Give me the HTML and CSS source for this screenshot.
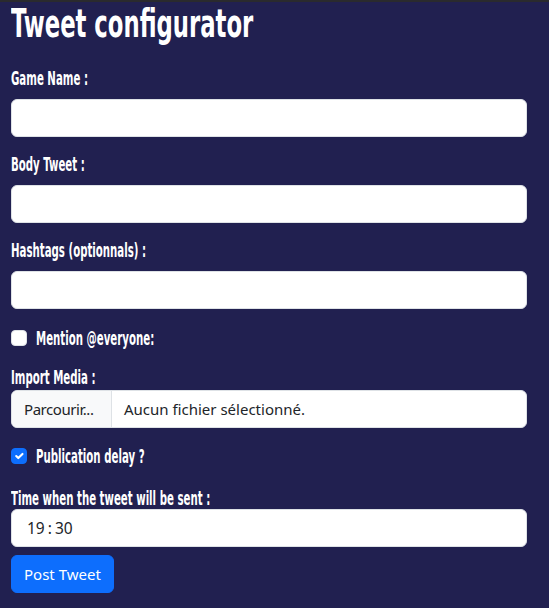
FILE: index.html
```html
<!DOCTYPE html>
<html lang="en">
<head>
<meta charset="utf-8">
<title>Tweet configurator</title>
<link rel="stylesheet" href="styles.css">
</head>
<body>
<main class="page">
  <h1 class="title"><span class="narrow">Tweet configurator</span></h1>
  <form class="form">
    <div class="field">
      <label class="label" for="game"><span class="narrow">Game Name :</span></label>
      <input class="control" id="game" type="text">
    </div>
    <div class="field">
      <label class="label" for="body"><span class="narrow">Body Tweet :</span></label>
      <input class="control" id="body" type="text">
    </div>
    <div class="field field--last">
      <label class="label" for="tags"><span class="narrow">Hashtags (optionnals) :</span></label>
      <input class="control" id="tags" type="text">
    </div>
    <div class="check check--first">
      <span class="box"></span>
      <span class="label label--inline"><span class="narrow">Mention @everyone:</span></span>
    </div>
    <div class="field field--media">
      <span class="label label--media"><span class="narrow">Import Media :</span></span>
      <div class="file">
        <span class="file-btn">Parcourir...</span>
        <span class="file-name">Aucun fichier sélectionné.</span>
      </div>
    </div>
    <div class="check check--second">
      <span class="box box--checked">
        <svg viewBox="0 0 20 20" width="14" height="14"><path d="M6 10l3 3 6-6" fill="none" stroke="#fff" stroke-width="3" stroke-linecap="round" stroke-linejoin="round"/></svg>
      </span>
      <span class="label label--inline"><span class="narrow">Publication delay ?</span></span>
    </div>
    <div class="field field--time">
      <span class="label label--time"><span class="narrow">Time when the tweet will be sent :</span></span>
      <div class="control time"><span>19</span><span class="colon">:</span><span>30</span></div>
    </div>
    <button class="btn" type="button">Post Tweet</button>
  </form>
</main>
</body>
</html>
```
FILE: styles.css
```css
* { box-sizing: border-box; }
html, body { margin: 0; padding: 0; }
body {
  background: #212050;
  border-top: 2px solid #2a2a2e;
  min-height: 608px;
  font-family: "Noto Sans", "Open Sans", sans-serif;
  color: #212529;
}
.page { padding: 0 11px; width: 538px; }
.narrow {
  display: inline-block;
  transform-origin: 0 50%;
  white-space: nowrap;
}
.title {
  margin: 0 0 21px;
  font-family: "DejaVu Sans Condensed", "DejaVu Sans", sans-serif;
  font-stretch: condensed;
  font-weight: 700;
  font-size: 39px;
  line-height: 44px;
  color: #fff;
}
.title .narrow { transform: scaleX(0.648); }
.form { display: flex; flex-direction: column; width: 516px; }
.field { display: flex; flex-direction: column; margin-bottom: 16px; }
.field--last { margin-bottom: 18px; }
.field--media { margin-bottom: 17px; }
.field--time { margin-bottom: 8px; }
.label {
  display: block;
  font-family: "DejaVu Sans Condensed", "DejaVu Sans", sans-serif;
  font-stretch: condensed;
  font-weight: 700;
  font-size: 19px;
  line-height: 22px;
  color: #fff;
  margin-bottom: 10px;
}
.label .narrow { transform: scaleX(0.597); }
.label--inline { margin: 0; }
.label--media { margin-bottom: 2px; }
.label--time { margin-bottom: 0; }
.control {
  display: block;
  height: 38px;
  width: 100%;
  border: 1px solid #dee2e6;
  border-radius: 6px;
  background: #fff;
  font: inherit;
  font-size: 15px;
  padding: 6px 12px;
}
.check {
  display: flex;
  align-items: center;
  gap: 9px;
  height: 22px;
}
.check--first { margin-bottom: 17px; }
.check--second { margin-bottom: 20px; }
.box {
  width: 16px;
  height: 16px;
  border-radius: 4px;
  background: #fff;
  border: 1px solid #dee2e6;
  display: flex;
  flex-shrink: 0;
}
.box--checked {
  background: #0d6efd;
  border-color: #0d6efd;
  align-items: center;
  justify-content: center;
}
.file {
  display: flex;
  height: 38px;
  border: 1px solid #dee2e6;
  border-radius: 6px;
  background: #fff;
  overflow: hidden;
  font-size: 15px;
  line-height: 36px;
  white-space: nowrap;
}
.file-btn {
  flex: 0 0 100px;
  padding-left: 12px;
  background: #f8f9fa;
  border-right: 1px solid #dee2e6;
  letter-spacing: -0.45px;
}
.file-name { padding-left: 12px; }
.time { display: flex; align-items: center; padding-left: 15px; font-size: 15.5px; line-height: 24px; }
.colon { margin: 0 3px; }
.btn {
  align-self: flex-start;
  height: 38px;
  padding: 0 12px;
  border: 1px solid #0d6efd;
  border-radius: 6px;
  background: #0d6efd;
  color: #fff;
  font-family: "Noto Sans", "Open Sans", sans-serif;
  font-size: 15px;
}
```
